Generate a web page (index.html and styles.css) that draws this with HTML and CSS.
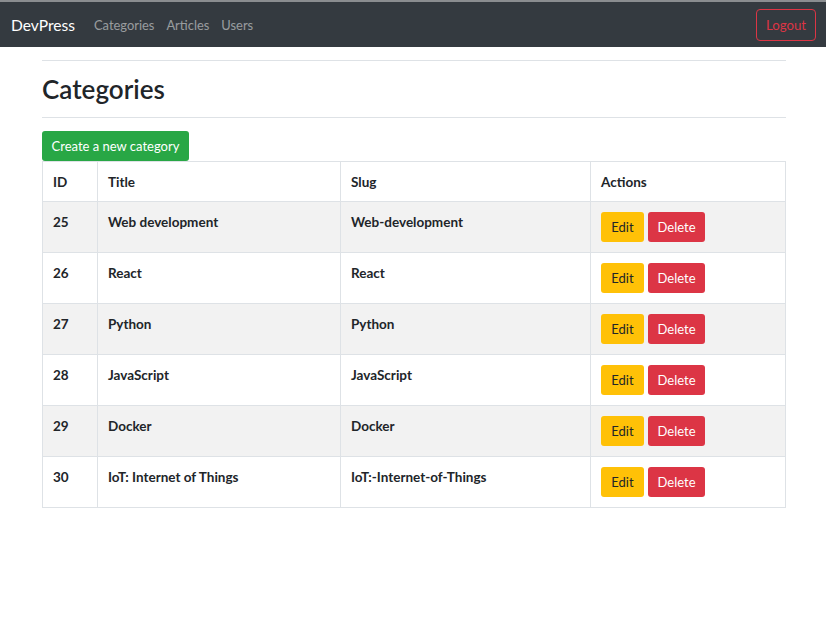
FILE: index.html
```html
<!DOCTYPE html>
<html>
<head>
<meta charset="utf-8">
<link rel="stylesheet" href="styles.css">
</head>
<body>
<nav class="navbar">
  <a class="brand">DevPress</a>
  <div class="nav-links">
    <a>Categories</a>
    <a>Articles</a>
    <a>Users</a>
  </div>
  <button class="btn-logout">Logout</button>
</nav>
<main class="container">
  <hr class="rule">
  <h1 class="title">Categories</h1>
  <hr class="rule">
  <button class="btn btn-create">Create a new category</button>
  <table class="table">
    <thead>
      <tr><th class="c-id">ID</th><th class="c-title">Title</th><th class="c-slug">Slug</th><th>Actions</th></tr>
    </thead>
    <tbody>
      <tr><td>25</td><td>Web development</td><td>Web-development</td><td class="actions"><button class="btn btn-edit">Edit</button><button class="btn btn-delete">Delete</button></td></tr>
      <tr><td>26</td><td>React</td><td>React</td><td class="actions"><button class="btn btn-edit">Edit</button><button class="btn btn-delete">Delete</button></td></tr>
      <tr><td>27</td><td>Python</td><td>Python</td><td class="actions"><button class="btn btn-edit">Edit</button><button class="btn btn-delete">Delete</button></td></tr>
      <tr><td>28</td><td>JavaScript</td><td>JavaScript</td><td class="actions"><button class="btn btn-edit">Edit</button><button class="btn btn-delete">Delete</button></td></tr>
      <tr><td>29</td><td>Docker</td><td>Docker</td><td class="actions"><button class="btn btn-edit">Edit</button><button class="btn btn-delete">Delete</button></td></tr>
      <tr><td>30</td><td>IoT: Internet of Things</td><td>IoT:-Internet-of-Things</td><td class="actions"><button class="btn btn-edit">Edit</button><button class="btn btn-delete">Delete</button></td></tr>
    </tbody>
  </table>
</main>
</body>
</html>
```

FILE: styles.css
```css
* { box-sizing: border-box; }
body {
  margin: 0;
  font-family: "Lato", "Noto Sans", sans-serif;
  font-size: 13.5px;
  color: #212529;
  background: #fff;
}
.navbar {
  height: 47px;
  background: #343a40;
  border-top: 2px solid #8a8d90;
  display: flex;
  align-items: center;
  padding: 0 10px 0 11px;
}
.brand {
  color: #fff;
  font-size: 15.6px;
  margin-right: 19px;
}
.nav-links {
  display: flex;
  gap: 12px;
  flex: 1;
}
.nav-links a {
  color: rgba(255,255,255,0.5);
  font-size: 12.9px;
}
.btn-logout {
  font-family: inherit;
  font-size: 13.2px;
  color: #dc3545;
  background: transparent;
  border: 1px solid #dc3545;
  border-radius: 4px;
  height: 32px;
  width: 60px;
  padding: 0;
}
.container {
  margin: 0 40px 0 42px;
  padding-top: 13px;
}
.rule {
  border: 0;
  border-top: 1px solid #dee2e6;
  margin: 0;
}
.title {
  font-size: 26px;
  font-weight: 600;
  margin: 0;
  height: 56px;
  display: flex;
  align-items: center;
  color: #212529;
}
.btn {
  font-family: inherit;
  font-size: 13px;
  border: 0;
  border-radius: 3px;
  cursor: pointer;
}
.btn-create {
  margin-top: 13px;
  height: 30px;
  width: 147px;
  padding: 0;
  background: #28a745;
  color: #fff;
  display: block;
}
.table {
  width: 100%;
  border-collapse: collapse;
  margin-top: 0;
}
.table th, .table td {
  border: 1px solid #dee2e6;
  text-align: left;
  vertical-align: top;
  font-weight: 700;
  padding: 12px 10px 0;
}
.table thead th { height: 40px; padding-top: 12px; }
.table tbody td { height: 51px; }
.table tbody tr:nth-child(odd) { background: #f2f2f2; }
.c-id { width: 55px; }
.c-title { width: 243px; }
.c-slug { width: 250px; }
.table td.actions { padding-top: 10px; }
.btn-edit {
  background: #ffc107;
  color: #212529;
  height: 30px;
  width: 43px;
  padding: 0;
  margin-right: 4px;
  font-weight: 400;
}
.btn-delete {
  background: #dc3545;
  color: #fff;
  height: 30px;
  width: 57px;
  padding: 0;
  font-weight: 400;
}
```
